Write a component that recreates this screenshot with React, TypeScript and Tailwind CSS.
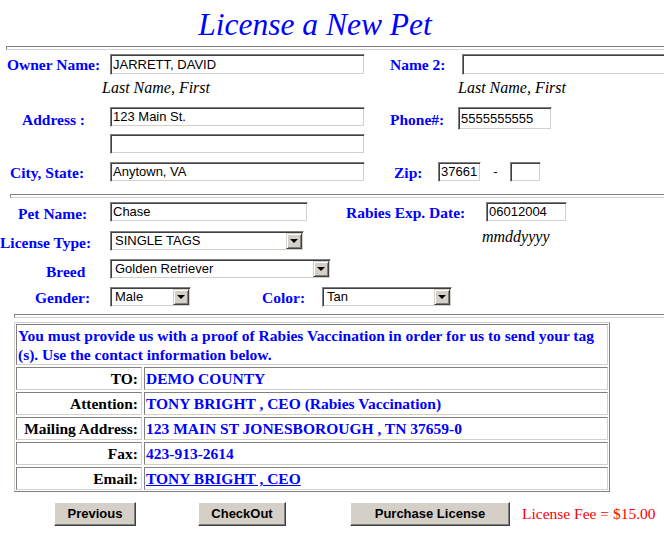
import React from "react";

// shared text styles
const label = "font-['Liberation_Serif','Times_New_Roman',serif] font-bold text-[15.5px] text-[#0000ff] whitespace-nowrap";
const hint = "font-['Liberation_Serif','Times_New_Roman',serif] italic text-[16px] text-black whitespace-nowrap";

const Input = ({ className, value = "" }: { className: string; value?: string }) => (
   <div
      className={`shrink-0 bg-white border border-t-[#808080] border-l-[#808080] border-b-white border-r-white shadow-[inset_1px_1px_0_#404040,inset_-1px_-1px_0_#d4d0c8] flex items-center pl-[2px] text-[13px] text-black font-['Liberation_Sans',Arial,sans-serif] overflow-hidden whitespace-nowrap ${className}`}
   >
      {value}
   </div>
);

const Select = ({ className, value }: { className: string; value: string }) => (
   <div
      className={`shrink-0 h-[20px] bg-white border border-t-[#808080] border-l-[#808080] border-b-white border-r-white shadow-[inset_1px_1px_0_#404040,inset_-1px_-1px_0_#d4d0c8] flex items-stretch p-[1px] text-[13px] text-black font-['Liberation_Sans',Arial,sans-serif] whitespace-nowrap ${className}`}
   >
      <span className="flex-1 flex items-center pl-[3px]">{value}</span>
      <span className="w-[16px] bg-[#d4d0c8] border border-t-[#d4d0c8] border-l-[#d4d0c8] border-b-[#404040] border-r-[#404040] shadow-[inset_1px_1px_0_#fff,inset_-1px_-1px_0_#808080] flex items-center justify-center">
         <span className="w-0 h-0 border-l-[4px] border-r-[4px] border-t-[4px] border-l-transparent border-r-transparent border-t-black" />
      </span>
   </div>
);

const Hr = ({ className }: { className: string }) => (
   <div className={`h-[4px] border-t border-l border-t-[#808080] border-l-[#808080] border-b border-b-[#d4d0c8] ${className}`} />
);

const Button = ({ className, text }: { className: string; text: string }) => (
   <div
      className={`h-[24px] bg-[#d4d0c8] border border-t-white border-l-white border-b-[#404040] border-r-[#404040] shadow-[inset_-1px_-1px_0_#808080] flex items-center justify-center font-['Liberation_Sans',Arial,sans-serif] font-bold text-[13px] text-black ${className}`}
   >
      {text}
   </div>
);

const contacts = [
   { label: "TO:", value: "DEMO COUNTY" },
   { label: "Attention:", value: "TONY BRIGHT , CEO (Rabies Vaccination)" },
   { label: "Mailing Address:", value: "123 MAIN ST JONESBOROUGH , TN 37659-0" },
   { label: "Fax:", value: "423-913-2614" },
   { label: "Email:", value: "TONY BRIGHT , CEO", link: true },
];

export default function App() {
   return (
      <div className="w-[664px] h-[540px] overflow-hidden bg-white">
         {/* Title */}
         <div className="w-[630px] h-[44px] pt-[5px] leading-[40px] text-center font-['Liberation_Serif','Times_New_Roman',serif] italic text-[31.5px] text-[#0000ff]">
            License a New Pet
         </div>
         <Hr className="ml-[6px] mt-[2px] w-[700px]" />

         {/* Owner */}
         <div className="mt-[4px] flex items-center h-[21px]">
            <div className="w-[110px] shrink-0 pl-[7px]">
               <span className={label}>Owner Name:</span>
            </div>
            <Input className="w-[255px] h-[21px]" value="JARRETT, DAVID" />
            <div className="w-[97px] shrink-0 pl-[25px]">
               <span className={label}>Name 2:</span>
            </div>
            <Input className="w-[220px] h-[21px]" />
         </div>
         <div className="flex items-center h-[24px] pt-[1px]">
            <span className={`ml-[102px] w-[356px] shrink-0 ${hint}`}>Last Name, First</span>
            <span className={hint}>Last Name, First</span>
         </div>

         {/* Address */}
         <div className="mt-[8px] flex items-start h-[23px]">
            <div className="w-[110px] shrink-0 pl-[22px] h-[23px] pt-[3px] flex items-center">
               <span className={label}>Address :</span>
            </div>
            <Input className="w-[255px] h-[20px]" value="123 Main St." />
            <div className="w-[93px] shrink-0 pl-[25px] h-[23px] pt-[3px] flex items-center">
               <span className={label}>Phone#:</span>
            </div>
            <Input className="w-[94px] h-[23px]" value="5555555555" />
         </div>
         <div className="mt-[4px] pl-[110px] flex">
            <Input className="w-[255px] h-[20px]" />
         </div>
         <div className="mt-[8px] flex items-center h-[20px]">
            <div className="w-[110px] shrink-0 pl-[10px]">
               <span className={label}>City, State:</span>
            </div>
            <Input className="w-[255px] h-[20px]" value="Anytown, VA" />
            <div className="w-[73px] shrink-0 pl-[29px]">
               <span className={label}>Zip:</span>
            </div>
            <Input className="w-[43px] h-[20px]" value="37661" />
            <span className="w-[29px] shrink-0 text-center text-[13px] font-['Liberation_Sans',Arial,sans-serif]">-</span>
            <Input className="w-[31px] h-[20px]" />
         </div>

         <Hr className="ml-[10px] mt-[12px] w-[700px]" />

         {/* Pet */}
         <div className="mt-[4px] flex items-center h-[20px]">
            <div className="w-[110px] shrink-0 pl-[18px] pt-[2px]">
               <span className={label}>Pet Name:</span>
            </div>
            <Input className="w-[198px] h-[20px]" value="Chase" />
            <div className="w-[178px] shrink-0 pl-[38px]">
               <span className={label}>Rabies Exp. Date:</span>
            </div>
            <Input className="w-[81px] h-[20px]" value="06012004" />
         </div>
         <div className="mt-[9px] flex items-center h-[20px]">
            <div className="w-[110px] shrink-0 pt-[2px]">
               <span className={label}>License Type:</span>
            </div>
            <Select className="w-[194px]" value="SINGLE TAGS" />
            <span className={`ml-[178px] mb-[8px] ${hint}`}>mmddyyyy</span>
         </div>
         <div className="mt-[8px] flex items-center h-[20px]">
            <div className="w-[110px] shrink-0 pl-[46px] pt-[4px]">
               <span className={label}>Breed</span>
            </div>
            <Select className="w-[221px]" value="Golden Retriever" />
         </div>
         <div className="mt-[8px] flex items-center h-[20px]">
            <div className="w-[110px] shrink-0 pl-[35px]">
               <span className={label}>Gender:</span>
            </div>
            <Select className="w-[81px]" value="Male" />
            <div className="w-[131px] shrink-0 pl-[71px]">
               <span className={label}>Color:</span>
            </div>
            <Select className="w-[130px]" value="Tan" />
         </div>

         <Hr className="ml-[14px] mt-[7px] w-[700px]" />

         {/* Contact table */}
         <div className="mt-[4px] ml-[14px] w-[596px] border border-t-[#d4d0c8] border-l-[#d4d0c8] border-b-[#808080] border-r-[#808080] p-[1px] flex flex-col gap-[2px]">
            <div className={`h-[41px] border border-t-[#808080] border-l-[#808080] border-b-[#d4d0c8] border-r-[#d4d0c8] pl-[1px] pt-[1px] leading-[19px] ${label}`}>
               You must provide us with a proof of Rabies Vaccination in order for us to send your tag
               <br />
               (s). Use the contact information below.
            </div>
            {contacts.map((c) => (
               <div key={c.label} className="flex gap-[2px] h-[23px]">
                  <div className={`w-[126px] shrink-0 border border-t-[#808080] border-l-[#808080] border-b-[#d4d0c8] border-r-[#d4d0c8] flex items-center justify-end pr-[3px] ${label} text-black`}>
                     {c.label}
                  </div>
                  <div className={`flex-1 border border-t-[#808080] border-l-[#808080] border-b-[#d4d0c8] border-r-[#d4d0c8] flex items-center pl-[1px] ${label}`}>
                     {c.link ? <a className="underline">{c.value}</a> : c.value}
                  </div>
               </div>
            ))}
         </div>

         {/* Actions */}
         <div className="mt-[10px] flex items-center h-[24px]">
            <Button className="ml-[54px] w-[82px]" text="Previous" />
            <Button className="ml-[62px] w-[88px]" text="CheckOut" />
            <Button className="ml-[64px] w-[160px]" text="Purchase License" />
            <span className="ml-[12px] font-['Liberation_Serif','Times_New_Roman',serif] text-[15.5px] text-[#ff0000] whitespace-nowrap">
               License Fee = $15.00
            </span>
         </div>
      </div>
   );
}
